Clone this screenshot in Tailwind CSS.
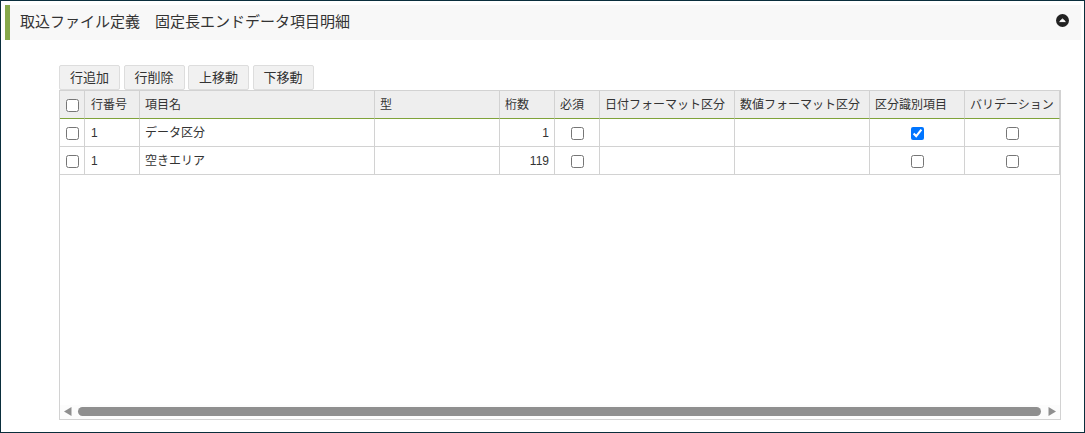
<!DOCTYPE html>
<html lang="ja">
<head>
    <meta charset="UTF-8">
    <title>取込ファイル定義</title>
    <script src="https://cdn.jsdelivr.net/npm/@tailwindcss/browser@4"></script>
</head>
<body class="bg-white font-['Liberation_Sans','Noto_Sans_CJK_JP',sans-serif] text-[#333]">
    <div class="h-[433px] w-[1085px] overflow-hidden border border-[#0a2e3c] pt-1 pl-1 pr-[3px]">
        <!-- section header -->
        <div class="flex h-[35px] items-center justify-between border-l-[5px] border-[#86a94a] bg-[#f8f8f8] pr-[12px] pl-[10px]">
            <h2 class="text-[15px] font-normal">取込ファイル定義　固定長エンドデータ項目明細</h2>
            <svg class="mb-[5px]" width="13" height="13" viewBox="0 0 13 13"><circle cx="6.5" cy="6.5" r="6.5" fill="#222"/><path d="M3.7 7.6 L6.5 5 L9.3 7.6 Z" fill="#fff" stroke="#fff" stroke-linejoin="round"/></svg>
        </div>

        <div class="mt-[25px] ml-[54px] w-[1002px]">
            <div class="flex h-[25px] gap-[3.5px] text-[13px]">
                <button class="w-[61px] rounded-[2px] border border-[#ddd] bg-[#f1f1f1]">行追加</button>
                <button class="w-[61px] rounded-[2px] border border-[#ddd] bg-[#f1f1f1]">行削除</button>
                <button class="w-[61px] rounded-[2px] border border-[#ddd] bg-[#f1f1f1]">上移動</button>
                <button class="w-[61px] rounded-[2px] border border-[#ddd] bg-[#f1f1f1]">下移動</button>
            </div>

            <div class="flex h-[330px] flex-col justify-between border border-[#d2d2d2]">
                <table class="w-[1000px] table-fixed border-separate border-spacing-0 text-xs">
                    <colgroup>
                        <col class="w-[25px]"><col class="w-[55px]"><col class="w-[235px]"><col class="w-[125px]"><col class="w-[55px]">
                        <col class="w-[45px]"><col class="w-[135px]"><col class="w-[135px]"><col class="w-[95px]"><col class="w-[95px]">
                    </colgroup>
                    <thead>
                        <tr class="h-[28px] bg-[#eee] text-left">
                            <th class="border-r border-b border-r-[#d2d2d2] border-b-[#7fa33a] pl-[1px] text-center font-normal"><input type="checkbox" class="align-middle"></th>
                            <th class="border-r border-b border-r-[#d2d2d2] border-b-[#7fa33a] pl-[6px] font-normal">行番号</th>
                            <th class="border-r border-b border-r-[#d2d2d2] border-b-[#7fa33a] pl-[5px] font-normal">項目名</th>
                            <th class="border-r border-b border-r-[#d2d2d2] border-b-[#7fa33a] pl-[5px] font-normal">型</th>
                            <th class="border-r border-b border-r-[#d2d2d2] border-b-[#7fa33a] pl-[5px] font-normal">桁数</th>
                            <th class="border-r border-b border-r-[#d2d2d2] border-b-[#7fa33a] pl-[5px] font-normal">必須</th>
                            <th class="border-r border-b border-r-[#d2d2d2] border-b-[#7fa33a] pl-[5px] font-normal">日付フォーマット区分</th>
                            <th class="border-r border-b border-r-[#d2d2d2] border-b-[#7fa33a] pl-[5px] font-normal">数値フォーマット区分</th>
                            <th class="border-r border-b border-r-[#d2d2d2] border-b-[#7fa33a] pl-[5px] font-normal">区分識別項目</th>
                            <th class="border-r border-b border-r-[#d2d2d2] border-b-[#7fa33a] pl-[5px] font-normal">バリデーション</th>
                        </tr>
                    </thead>
                    <tbody>
                        <tr class="h-[28px]">
                            <td class="border-r border-b border-[#d2d2d2] pl-[1px] text-center"><input type="checkbox" class="align-middle"></td>
                            <td class="border-r border-b border-[#d2d2d2] pl-[6px]">1</td>
                            <td class="border-r border-b border-[#d2d2d2] pl-[5px]">データ区分</td>
                            <td class="border-r border-b border-[#d2d2d2]"></td>
                            <td class="border-r border-b border-[#d2d2d2] pr-[5px] text-right">1</td>
                            <td class="border-r border-b border-[#d2d2d2] text-center"><input type="checkbox" class="align-middle"></td>
                            <td class="border-r border-b border-[#d2d2d2]"></td>
                            <td class="border-r border-b border-[#d2d2d2]"></td>
                            <td class="border-r border-b border-[#d2d2d2] text-center"><input type="checkbox" checked class="align-middle"></td>
                            <td class="border-r border-b border-[#d2d2d2] text-center"><input type="checkbox" class="align-middle"></td>
                        </tr>
                        <tr class="h-[28px]">
                            <td class="border-r border-b border-[#d2d2d2] pl-[1px] text-center"><input type="checkbox" class="align-middle"></td>
                            <td class="border-r border-b border-[#d2d2d2] pl-[6px]">1</td>
                            <td class="border-r border-b border-[#d2d2d2] pl-[5px]">空きエリア</td>
                            <td class="border-r border-b border-[#d2d2d2]"></td>
                            <td class="border-r border-b border-[#d2d2d2] pr-[5px] text-right">119</td>
                            <td class="border-r border-b border-[#d2d2d2] text-center"><input type="checkbox" class="align-middle"></td>
                            <td class="border-r border-b border-[#d2d2d2]"></td>
                            <td class="border-r border-b border-[#d2d2d2]"></td>
                            <td class="border-r border-b border-[#d2d2d2] text-center"><input type="checkbox" class="align-middle"></td>
                            <td class="border-r border-b border-[#d2d2d2] text-center"><input type="checkbox" class="align-middle"></td>
                        </tr>
                    </tbody>
                </table>

                <!-- scrollbar -->
                <div class="flex h-[14px] items-center bg-[#fcfcfc] px-[4px] pb-[1px]">
                    <svg class="flex-none" width="8" height="9" viewBox="0 0 8 9"><path d="M7.5 0 V9 L0 4.5 Z" fill="#8f8f8f"/></svg>
                    <div class="mr-[7px] ml-[6px] h-[9px] flex-1 rounded-full bg-[#8f8f8f]"></div>
                    <svg class="flex-none" width="8" height="9" viewBox="0 0 8 9"><path d="M0.5 0 V9 L8 4.5 Z" fill="#8f8f8f"/></svg>
                </div>
            </div>
        </div>
    </div>
</body>
</html>
